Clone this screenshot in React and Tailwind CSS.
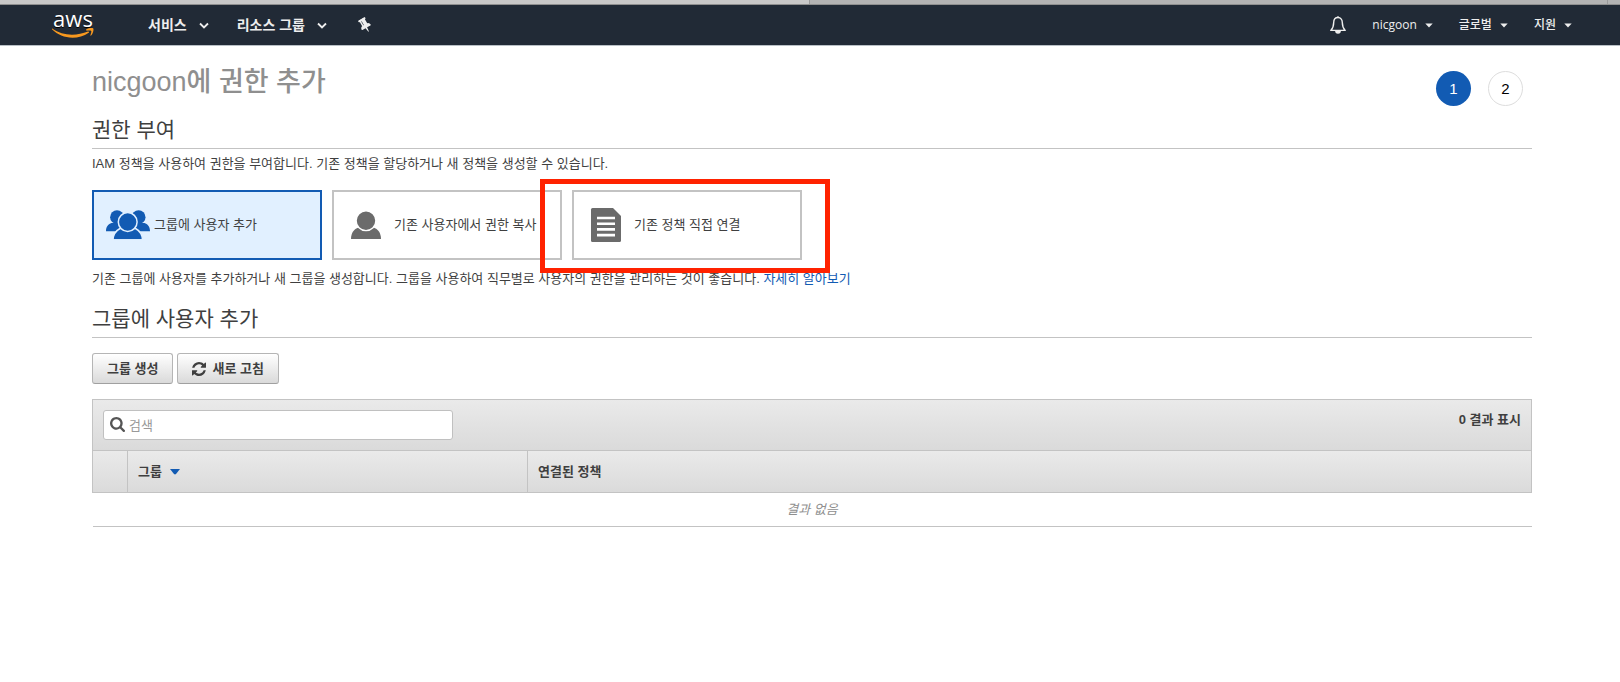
import { useState } from 'react';

const Chevron = () => (
  <svg className="h-2 w-[10px]" viewBox="0 0 10 8" fill="none" stroke="currentColor" strokeWidth={1.8}>
    <path d="M1 2.500l4 4 4-4" />
  </svg>
);

const Caret = () => (
  <svg className="h-2 w-2" viewBox="0 0 8 8" fill="currentColor">
    <path d="M.3 2.500h7.400L4 6.500z" />
  </svg>
);

const PinIcon = () => (
  <svg className="h-[15px] w-[15px] -rotate-30" viewBox="-192 128 1664 1664" fill="currentColor">
    <path d="M608 864v-448q0-14-9-23t-23-9-23 9-9 23v448q0 14 9 23t23 9 23-9 9-23zm672 352q0 26-19 45t-45 19h-429l-51 483q-2 12-10.5 20.5t-20.5 8.5h-1q-27 0-32-27l-76-485h-404q-26 0-45-19t-19-45q0-123 78.5-221.5t177.5-98.5v-512q-52 0-90-38t-38-90 38-90 90-38h640q52 0 90 38t38 90-38 90-90 38v512q99 0 177.5 98.5t78.5 221.5z" />
  </svg>
);

const BellIcon = () => (
  <svg className="h-[18px] w-4" viewBox="0 0 16 18" fill="none" stroke="currentColor" strokeWidth={1.4}>
    <path d="M8 1.5C5 1.5 3.7 4 3.7 6.500c0 4-.8 5.800-2.900 7.900h14.400c-2.100-2.100-2.900-3.900-2.900-7.900C12.300 4 11 1.500 8 1.500z" strokeLinejoin="round" />
    <path d="M8 .2v1.500" />
    <path d="M5.800 14.800a2.200 2.200 0 0 0 4.400 0z" fill="currentColor" />
  </svg>
);

const RefreshIcon = () => (
  <svg className="h-[14px] w-[14px]" viewBox="0 0 1536 1536" fill="currentColor">
    <path d="M1511 928q0 5-1 7-64 268-268 434.500t-478 166.500q-146 0-282.500-55t-243.500-157l-129 129q-19 19-45 19t-45-19-19-45v-448q0-26 19-45t45-19h448q26 0 45 19t19 45-19 45l-137 137q71 66 161 102t187 36q134 0 250-65t186-179q11-17 53-117 8-23 30-23h192q13 0 22.500 9.500t9.500 22.500zm25-800v448q0 26-19 45t-45 19h-448q-26 0-45-19t-19-45 19-45l138-138q-148-137-349-137-134 0-250 65t-186 179q-11 17-53 117-8 23-30 23h-199q-13 0-22.500-9.500t-9.500-22.500v-7q65-268 270-434.500t480-166.500q146 0 284 55.500t245 156.500l130-129q19-19 45-19t45 19 19 45z" />
  </svg>
);

const SearchIcon = () => (
  <svg className="pointer-events-none absolute left-[7px] top-[7px] h-[15px] w-[15px] text-[#555]" viewBox="0 128 1664 1664" fill="currentColor">
    <path d="M1152 832q0-185-131.500-316.500t-316.500-131.500-316.500 131.500-131.500 316.500 131.500 316.500 316.500 131.500 316.500-131.500 131.500-316.500zm512 832q0 52-38 90t-90 38q-54 0-90-38l-343-342q-179 124-399 124-143 0-273.500-55.500t-225-150-150-225-55.500-273.500 55.500-273.500 150-225 225-150 273.500-55.500 273.500 55.500 225 150 150 225 55.500 273.500q0 220-124 399l343 343q37 37 37 90z" />
  </svg>
);

const GroupIcon = () => (
  <svg className="h-9 w-[52px] text-[#125bb3]" viewBox="0 0 52 36" fill="currentColor">
    <circle cx="15" cy="10.200" r="6.900" />
    <circle cx="36.600" cy="10.200" r="6.900" />
    <path d="M4 24.300c0-4.800 2.500-7.300 5.500-8.300h9.500v8.300zM48 24.300c0-4.800-2.500-7.300-5.500-8.300H33v8.300z" />
    <path d="M11 33c0-6.500 3.200-9.500 7.700-12h14.100c4.500 2.500 7.700 5.500 7.700 12z" stroke="#e1f0ff" strokeWidth="1.500" />
    <circle cx="25.700" cy="15" r="9.400" stroke="#e1f0ff" strokeWidth="1.500" />
    <path d="M10 32.200h32V36H10z" fill="#e1f0ff" />
  </svg>
);

const UserIcon = () => (
  <svg className="h-9 w-[52px] text-[#6b6b6b]" viewBox="0 0 52 36" fill="currentColor">
    <path d="M9 32c0-6 3-10 7.500-11.500h15C36 22 39 26 39 32z" />
    <circle cx="24" cy="13.700" r="9.900" stroke="#fff" strokeWidth="1.400" />
  </svg>
);

const PolicyIcon = () => (
  <svg className="h-9 w-[52px] text-[#6b6b6b]" viewBox="0 0 52 36" fill="currentColor">
    <path d="M10.500 1H31l8 8v24.500a1.500 1.500 0 0 1-1.500 1.500h-27A1.500 1.500 0 0 1 9 33.500v-31A1.500 1.500 0 0 1 10.500 1z" />
    <path d="M15 11h18M15 16.700h18M15 22.400h18M15 28.100h18" stroke="#fff" strokeWidth="2.600" />
  </svg>
);

const AwsLogo = () => (
  <a href="#home" aria-label="aws" className="flex w-[42px] flex-col items-center pb-1 text-white">
    <span className="font-['Open_Sans',sans-serif] text-[22px] leading-5 font-medium">aws</span>
    <svg className="h-[10px] w-[42px]" viewBox="0 0 42 10" fill="#f7981f">
      <path d="M.3.600C6 5 13 6.700 20 6.700c5.500 0 11-1.200 16-3.100.9-.3 1.500.6.7 1.200C32 8.300 26 9.700 20.500 9.700 12.500 9.700 5.500 6.500.2 1.500c-.4-.4-.2-1.100.1-.9z" />
      <path d="M34.300 1.300c1.800-1.200 6.300-1.600 7-.7.600.9-.2 5.200-2.200 7-.3.300-.8.100-.7-.3.500-1.300 1.300-3.700.8-4.400-.5-.6-3-.4-4.500-.2-.5 0-.8-.9-.4-1.400z" />
    </svg>
  </a>
);

const methods = [
  { id: 'group', label: '그룹에 사용자 추가', Icon: GroupIcon },
  { id: 'copy', label: '기존 사용자에서 권한 복사', Icon: UserIcon },
  { id: 'attach', label: '기존 정책 직접 연결', Icon: PolicyIcon, highlighted: true },
];

const accountMenus = ['nicgoon', '글로벌', '지원'];

const TopNav = () => (
  <nav className="flex h-[41px] items-center border-b border-[#b9c0c6] bg-[#212a36] pr-12 pl-[52px] text-[#eee] [text-shadow:0_1px_0_#000]">
    <AwsLogo />
    <button className="ml-[54px] flex items-center gap-3 text-sm font-bold">
      서비스 <Chevron />
    </button>
    <button className="ml-7 flex items-center gap-3 text-sm font-bold">
      리소스 그룹 <Chevron />
    </button>
    <button aria-label="고정" className="ml-[30px]">
      <PinIcon />
    </button>
    <div className="ml-auto flex items-center gap-[26px]">
      <button aria-label="알림">
        <BellIcon />
      </button>
      {accountMenus.map((name) => (
        <button key={name} className="flex items-center gap-2 font-['Open_Sans','Noto_Sans_CJK_KR',sans-serif] text-xs font-medium">
          {name} <Caret />
        </button>
      ))}
    </div>
  </nav>
);

const MethodCard = ({ method, selected, onSelect }) => {
  const { label, Icon, highlighted } = method;
  return (
    <div className="relative">
      <button
        aria-pressed={selected}
        onClick={onSelect}
        className={`flex h-[70px] w-[230px] items-center border-2 pl-2 text-left whitespace-nowrap ${selected ? 'border-[#125bb3] bg-[#e1f0ff]' : 'border-[#c3c3c3] bg-white'}`}
      >
        <Icon />
        {label}
      </button>
      {highlighted && (
        <div className="pointer-events-none absolute -top-[11px] -right-7 -bottom-[13px] -left-8 border-5 border-[#ff2200]" />
      )}
    </div>
  );
};

const SectionTitle = ({ children }) => (
  <h2 className="border-b border-[#c3c3c3] py-[2px] text-[21px] leading-8">{children}</h2>
);

const buttonClass =
  'flex h-[31px] items-center gap-[6px] rounded-[3px] border border-[#b5b5b5] border-b-[#a0a0a0] bg-gradient-to-b from-white to-[#dadada] px-[14px] font-bold';

export default function App() {
  const [method, setMethod] = useState('group');
  const [query, setQuery] = useState('');

  return (
    <div className="bg-white font-['Liberation_Sans','Noto_Sans_CJK_KR',sans-serif] text-[13px] leading-5 text-[#3f3f3f]">
      <div className="flex h-[5px] border-b border-[#8f8f8f] bg-[#b3b3b3]">
        <div className="w-1/2 border-r border-[#999] bg-[#c8c8c8]" />
        <div className="mr-3 flex-1 border-r border-[#999]" />
      </div>
      <TopNav />

      <main className="pr-[88px] pl-[92px]">
        <header className="flex items-start justify-between pt-4">
          <h1 className="text-[27px] leading-10 font-medium text-[#8f8f8f]">nicgoon에 권한 추가</h1>
          <ol className="mt-[9px] mr-[9px] flex gap-[17px] text-[15px]">
            <li className="flex size-[35px] items-center justify-center rounded-full bg-[#125bb3] text-white">1</li>
            <li className="flex size-[35px] items-center justify-center rounded-full border border-[#ddd] text-black">2</li>
          </ol>
        </header>

        <section className="mt-[6px]">
          <SectionTitle>권한 부여</SectionTitle>
          <p className="mt-[5px]">
            IAM 정책을 사용하여 권한을 부여합니다. 기존 정책을 할당하거나 새 정책을 생성할 수 있습니다.
          </p>
          <div className="mt-4 flex gap-[10px]">
            {methods.map((m) => (
              <MethodCard key={m.id} method={m} selected={m.id === method} onSelect={() => setMethod(m.id)} />
            ))}
          </div>
          <p className="mt-[9px]">
            기존 그룹에 사용자를 추가하거나 새 그룹을 생성합니다. 그룹을 사용하여 직무별로 사용자의 권한을 관리하는 것이 좋습니다.{' '}
            <a href="#learn" className="text-[#125bb3]">자세히 알아보기</a>
          </p>
        </section>

        <section className="mt-3">
          <SectionTitle>그룹에 사용자 추가</SectionTitle>
          <div className="mt-[15px] flex gap-1">
            <button className={buttonClass}>그룹 생성</button>
            <button className={buttonClass}>
              <RefreshIcon />
              새로 고침
            </button>
          </div>

          <div className="mt-[15px] flex h-[51px] items-start justify-between border border-b-0 border-[#c3c3c3] bg-gradient-to-b from-[#eaeaea] to-[#dadada] px-[10px] pt-[10px]">
            <div className="relative">
              <SearchIcon />
              <input
                type="text"
                aria-label="검색"
                value={query}
                onChange={(e) => setQuery(e.target.value)}
                placeholder="검색"
                className="h-[30px] w-[350px] rounded-[3px] border border-[#c0c0c0] bg-white pl-[25px] outline-none placeholder:text-[#999]"
              />
            </div>
            <span className="font-bold">0 결과 표시</span>
          </div>
          <table className="w-full table-fixed border-collapse">
            <thead>
              <tr className="h-[42px] bg-gradient-to-b from-[#eaeaea] to-[#dadada] text-left">
                <td className="w-[35px] border border-[#c3c3c3]" />
                <th className="w-[400px] border border-[#c3c3c3] px-[10px]">
                  <span className="flex items-center gap-2">
                    그룹
                    <svg className="h-[6px] w-[10px]" viewBox="0 0 10 6" fill="#125bb3">
                      <path d="M0 0h10L6 5a1.500 1.500 0 0 1-2 0z" />
                    </svg>
                  </span>
                </th>
                <th className="border border-[#c3c3c3] px-[10px]">연결된 정책</th>
              </tr>
            </thead>
            <tbody>
              <tr className="h-[34px] border-b border-[#c3c3c3]">
                <td colSpan={3} className="text-center text-[#8f8f8f] italic">결과 없음</td>
              </tr>
            </tbody>
          </table>
        </section>
      </main>
    </div>
  );
}
